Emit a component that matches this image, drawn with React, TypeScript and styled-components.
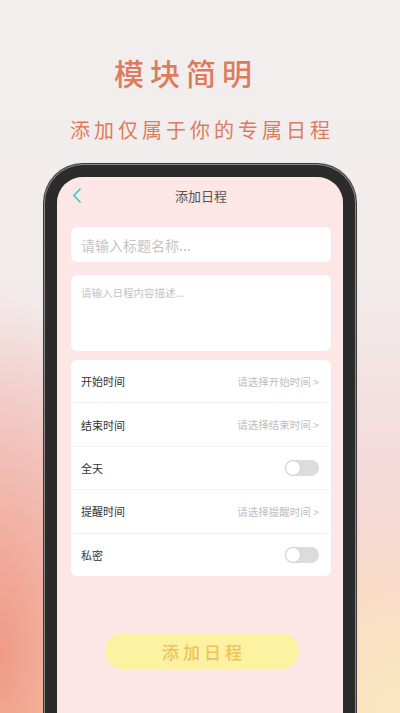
import React from "react";
import styled, { createGlobalStyle } from "styled-components";

const Global = createGlobalStyle`
  html, body { margin: 0; padding: 0; }
  body { font-family: "Noto Sans CJK SC", "Noto Sans", sans-serif; }
`;

const Page = styled.div`
  width: 400px;
  height: 713px;
  overflow: hidden;
  display: flex;
  flex-direction: column;
  align-items: center;
  background:
    radial-gradient(ellipse 140px 360px at 0% 92%, rgba(238, 138, 118, 0.8), rgba(238, 138, 118, 0) 100%),
    radial-gradient(ellipse 160px 200px at 100% 100%, rgba(252, 232, 192, 0.9), rgba(252, 232, 192, 0) 100%),
    linear-gradient(180deg, #f3efef 0%, #f2ebeb 40%, #f4dcdc 62%, #f6d6cc 82%, #f8dcc0 100%);
`;

const Title = styled.h1`
  margin: 52px 34px 0 0;
  font-family: "Noto Sans CJK SC", sans-serif;
  font-weight: 500;
  font-size: 30px;
  line-height: 40px;
  letter-spacing: 6px;
  padding-left: 6px;
  color: #dc7c5c;
`;

const Subtitle = styled.h2`
  margin: 25px 0 0 0;
  font-family: "Noto Sans CJK SC", sans-serif;
  font-weight: 400;
  font-size: 20px;
  line-height: 26px;
  letter-spacing: 4px;
  padding-left: 4px;
  color: #dc7c5c;
`;

const Phone = styled.div`
  margin-top: 22px;
  width: 310px;
  flex: 0 0 auto;
  height: 600px;
  box-sizing: border-box;
  border: 12px solid #2b2b2b;
  border-bottom: none;
  border-radius: 38px 38px 0 0;
  box-shadow:
    inset 0 0 0 1px #6b6b6b,
    0 0 0 1px #8a8a8a,
    0 0 0 2px #3a3a3a;
  background: #fce6e6;
`;

const Screen = styled.div`
  height: 100%;
  border-radius: 26px 26px 0 0;
  background: #fce6e6;
  padding: 0 12px 0 14px;
  display: flex;
  flex-direction: column;
  overflow: hidden;
`;

const Header = styled.div`
  height: 37px;
  display: flex;
  align-items: center;
  justify-content: center;
  position: relative;
  font-size: 13px;
  color: #555;
`;

const Back = styled.svg`
  position: absolute;
  left: 1px;
  top: 10px;
`;

const Card = styled.div<{ $h: number }>`
  background: #fff;
  border-radius: 6px;
  height: ${(p) => p.$h}px;
  box-sizing: border-box;
`;

const InputCard = styled(Card)`
  margin-top: 13px;
  display: flex;
  align-items: center;
  padding: 0 10px;
  font-size: 14px;
  color: #c4c4c4;
`;

const DescCard = styled(Card)`
  margin-top: 13px;
  padding: 10px 10px;
  font-size: 10.5px;
  color: #c4c4c4;
  line-height: 16px;
`;

const ListCard = styled(Card)`
  margin-top: 9px;
  display: flex;
  flex-direction: column;
  overflow: hidden;
`;

const Row = styled.div`
  flex: 1;
  display: flex;
  align-items: center;
  justify-content: space-between;
  padding: 0 12px 0 10px;
  border-top: 1px solid #f2f2f2;
  &:first-child { border-top: none; }
`;

const Label = styled.span`
  font-size: 11px;
  color: #333;
`;

const Value = styled.span`
  font-size: 10.5px;
  color: #bdbdbd;
`;

const Toggle = styled.div`
  width: 34px;
  height: 16px;
  border-radius: 8px;
  background: #dcdcdc;
  position: relative;
  &::after {
    content: "";
    position: absolute;
    left: 0;
    top: 0;
    width: 14px;
    height: 14px;
    border-radius: 50%;
    background: #fff;
    border: 1px solid #d0d0d0;
  }
`;

const Spacer = styled.div`
  height: 57px;
  flex: 0 0 auto;
`;

const Button = styled.div`
  align-self: center;
  margin-left: 2px;
  width: 194px;
  height: 36px;
  border-radius: 18px;
  background: #fdf1a2;
  display: flex;
  align-items: center;
  justify-content: center;
  font-size: 17px;
  letter-spacing: 4px;
  padding-left: 4px;
  box-sizing: border-box;
  color: #efc35a;
  font-weight: 500;
`;

const rows: { label: string; value?: string; toggle?: boolean }[] = [
  { label: "开始时间", value: "请选择开始时间 >" },
  { label: "结束时间", value: "请选择结束时间 >" },
  { label: "全天", toggle: true },
  { label: "提醒时间", value: "请选择提醒时间 >" },
  { label: "私密", toggle: true },
];

export default function App() {
  return (
    <Page>
      <Global />
      <Title>模块简明</Title>
      <Subtitle>添加仅属于你的专属日程</Subtitle>
      <Phone>
        <Screen>
          <Header>
            <Back width="10" height="17" viewBox="0 0 10 17">
              <path d="M8.5 1.5 L2 8.5 L8.5 15.5" fill="none" stroke="#3fcbd2" strokeWidth="1.8" />
            </Back>
            添加日程
          </Header>
          <InputCard $h={35}>请输入标题名称...</InputCard>
          <DescCard $h={76}>请输入日程内容描述...</DescCard>
          <ListCard $h={216}>
            {rows.map((r) => (
              <Row key={r.label}>
                <Label>{r.label}</Label>
                {r.toggle ? <Toggle /> : <Value>{r.value}</Value>}
              </Row>
            ))}
          </ListCard>
          <Spacer />
          <Button>添加日程</Button>
        </Screen>
      </Phone>
    </Page>
  );
}
